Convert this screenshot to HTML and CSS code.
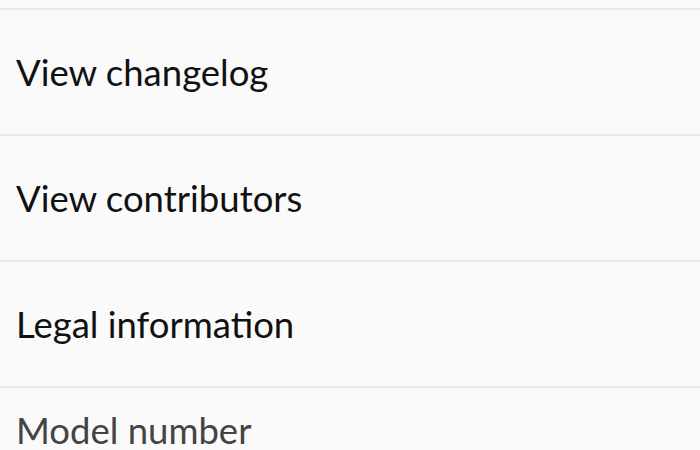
FILE: index.html
```html
<!DOCTYPE html>
<html>
<head>
<meta charset="utf-8">
<link rel="stylesheet" href="styles.css">
</head>
<body>
<div class="list">
  <div class="stub"></div>
  <div class="row"><span class="title">View changelog</span></div>
  <div class="row"><span class="title">View contributors</span></div>
  <div class="row"><span class="title">Legal information</span></div>
  <div class="row two">
    <span class="title sub">Model number</span>
  </div>
</div>
</body>
</html>
```

FILE: styles.css
```css
html, body {
  margin: 0;
  padding: 0;
  width: 700px;
  height: 450px;
  overflow: hidden;
  background: #fafafa;
}
.list {
  display: flex;
  flex-direction: column;
  font-family: Lato, "Noto Sans", sans-serif;
}
.stub {
  height: 8px;
  border-bottom: 2px solid #e8e8e8;
}
.row {
  height: 124px;
  border-bottom: 2px solid #e8e8e8;
  display: flex;
  flex-direction: column;
  justify-content: center;
  padding: 0 16px;
}
.title {
  font-size: 36.5px;
  color: #111111;
  line-height: 42px;
}
.row.two {
  height: 62px;
  border-bottom: none;
  justify-content: flex-start;
  padding-top: 21px;
}
.title.sub {
  color: #444444;
}
```
